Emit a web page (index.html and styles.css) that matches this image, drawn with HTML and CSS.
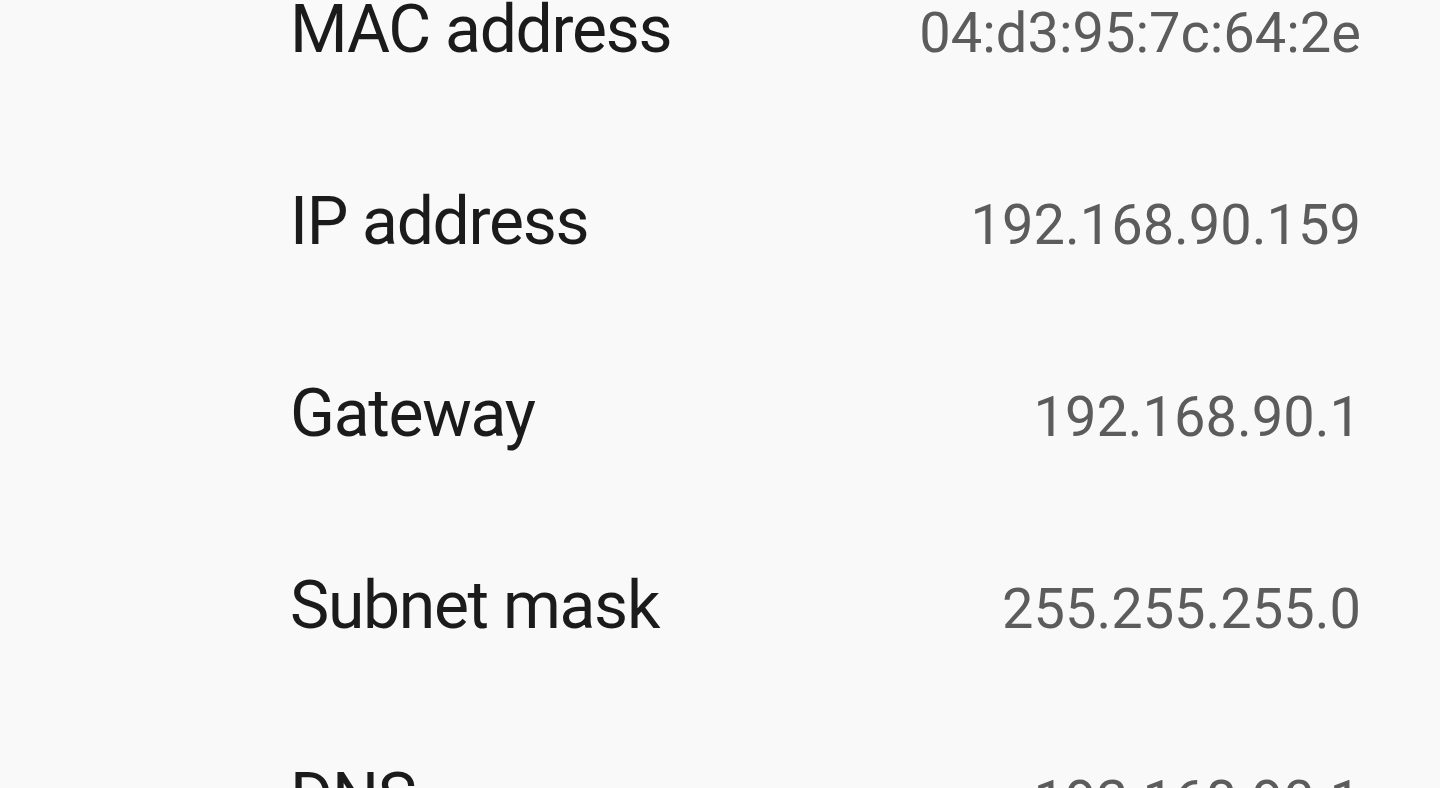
FILE: index.html
```html
<!DOCTYPE html>
<html>
    <head>
        <title>Advanced Wi-Fi</title>
        <link rel="stylesheet" href="styles.css">
    </head>
    <body>
        <div class="info-list">
            <div class="info-row">
                <span class="info-label">MAC address</span>
                <span class="info-value">04:d3:95:7c:64:2e</span>
            </div>
            <div class="info-row">
                <span class="info-label">IP address</span>
                <span class="info-value">192.168.90.159</span>
            </div>
            <div class="info-row">
                <span class="info-label">Gateway</span>
                <span class="info-value">192.168.90.1</span>
            </div>
            <div class="info-row">
                <span class="info-label">Subnet mask</span>
                <span class="info-value">255.255.255.0</span>
            </div>
            <div class="info-row">
                <span class="info-label">DNS</span>
                <span class="info-value">192.168.90.1</span>
            </div>
        </div>
    </body>
</html>
```

FILE: styles.css
```css
html, body{
    margin: 0;
    height: 100%;
    overflow: hidden;
    background-color: #f9f9f9;
    font-family: Roboto, "Noto Sans", sans-serif;
}

.info-list{
    margin-top: -66px;
    padding-left: 290px;
    padding-right: 79px;
}

.info-row{
    display: flex;
    justify-content: space-between;
    align-items: baseline;
    height: 192px;
    line-height: 192px;
}

.info-label{
    font-size: 66px;
    letter-spacing: -1.3px;
    color: #1b1b1b;
}

.info-value{
    font-size: 56px;
    color: #5c5c5c;
}
```
